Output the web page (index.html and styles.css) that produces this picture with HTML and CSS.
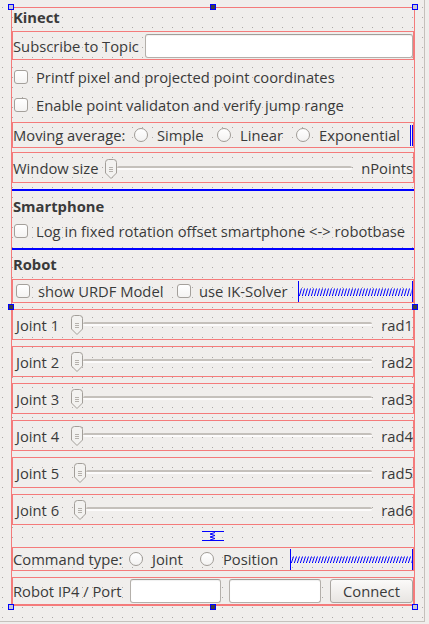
FILE: index.html
```html
<!DOCTYPE html>
<html>
<head>
<meta charset="utf-8">
<link rel="stylesheet" href="styles.css">
</head>
<body>
<div class="form">
  <div class="main">
    <div class="title">Kinect</div>

    <div class="box row-topic">
      <span class="lbl lbl-topic">Subscribe to Topic</span>
      <span class="field field-grow"></span>
    </div>

    <div class="check-row cr-first"><span class="cb"></span><span>Printf pixel and projected point coordinates</span></div>
    <div class="check-row"><span class="cb"></span><span>Enable point validaton and verify jump range</span></div>

    <div class="box row-moving">
      <span class="lbl lbl-moving">Moving average:</span>
      <span class="opt opt-simple"><span class="rb"></span>Simple</span>
      <span class="opt opt-linear"><span class="rb"></span>Linear</span>
      <span class="opt"><span class="rb"></span>Exponential</span>
      <span class="hspacer hspacer-min"></span>
    </div>

    <div class="box row-window">
      <span class="lbl lbl-window">Window size</span>
      <span class="slider slider-window">
        <svg class="handle" width="12" height="20" viewBox="0 0 12 20"><path d="M0.5 3.5 Q0.5 0.5 3.5 0.5 H8.5 Q11.5 0.5 11.5 3.5 V14 L6 19.5 L0.5 14 Z" fill="#f3f2f0" stroke="#a29e99"/><path d="M4 8.5 H8 M4 10.5 H8 M4 12.5 H8" stroke="#b5b1ac"/></svg>
        <span class="track"></span>
      </span>
      <span class="unit">nPoints</span>
    </div>

    <div class="hline hline-1"></div>

    <div class="title t-smart">Smartphone</div>
    <div class="check-row cr-smart"><span class="cb"></span><span>Log in fixed rotation offset smartphone &lt;-&gt; robotbase</span></div>

    <div class="hline hline-2"></div>

    <div class="title t-robot">Robot</div>

    <div class="box row-robot">
      <span class="chk chk-urdf"><span class="cb"></span>show URDF Model</span>
      <span class="chk"><span class="cb"></span>use IK-Solver</span>
      <span class="hspacer hspacer-robot">
        <svg class="zig" width="100%" height="8"><defs><pattern id="zz1" width="3" height="8" patternUnits="userSpaceOnUse"><path d="M0.5 7.5 L2.5 0.5 M0 7.5 H1" fill="none" stroke="#0000ff" stroke-width="1"/></pattern></defs><rect width="100%" height="8" fill="url(#zz1)"/></svg>
      </span>
    </div>

    <div class="box row-joint">
      <span class="lbl lbl-joint">Joint 1</span>
      <span class="slider">
        <svg class="handle" width="12" height="20" viewBox="0 0 12 20"><path d="M0.5 3.5 Q0.5 0.5 3.5 0.5 H8.5 Q11.5 0.5 11.5 3.5 V14 L6 19.5 L0.5 14 Z" fill="#f3f2f0" stroke="#a29e99"/><path d="M4 8.5 H8 M4 10.5 H8 M4 12.5 H8" stroke="#b5b1ac"/></svg>
        <span class="track"></span>
      </span>
      <span class="unit">rad1</span>
    </div>
    <div class="box row-joint">
      <span class="lbl lbl-joint">Joint 2</span>
      <span class="slider">
        <svg class="handle" width="12" height="20" viewBox="0 0 12 20"><path d="M0.5 3.5 Q0.5 0.5 3.5 0.5 H8.5 Q11.5 0.5 11.5 3.5 V14 L6 19.5 L0.5 14 Z" fill="#f3f2f0" stroke="#a29e99"/><path d="M4 8.5 H8 M4 10.5 H8 M4 12.5 H8" stroke="#b5b1ac"/></svg>
        <span class="track"></span>
      </span>
      <span class="unit">rad2</span>
    </div>
    <div class="box row-joint">
      <span class="lbl lbl-joint">Joint 3</span>
      <span class="slider">
        <svg class="handle" width="12" height="20" viewBox="0 0 12 20"><path d="M0.5 3.5 Q0.5 0.5 3.5 0.5 H8.5 Q11.5 0.5 11.5 3.5 V14 L6 19.5 L0.5 14 Z" fill="#f3f2f0" stroke="#a29e99"/><path d="M4 8.5 H8 M4 10.5 H8 M4 12.5 H8" stroke="#b5b1ac"/></svg>
        <span class="track"></span>
      </span>
      <span class="unit">rad3</span>
    </div>
    <div class="box row-joint">
      <span class="lbl lbl-joint">Joint 4</span>
      <span class="slider">
        <svg class="handle" width="12" height="20" viewBox="0 0 12 20"><path d="M0.5 3.5 Q0.5 0.5 3.5 0.5 H8.5 Q11.5 0.5 11.5 3.5 V14 L6 19.5 L0.5 14 Z" fill="#f3f2f0" stroke="#a29e99"/><path d="M4 8.5 H8 M4 10.5 H8 M4 12.5 H8" stroke="#b5b1ac"/></svg>
        <span class="track"></span>
      </span>
      <span class="unit">rad4</span>
    </div>
    <div class="box row-joint">
      <span class="lbl lbl-joint lbl-joint-wide">Joint 5</span>
      <span class="slider">
        <svg class="handle" width="12" height="20" viewBox="0 0 12 20"><path d="M0.5 3.5 Q0.5 0.5 3.5 0.5 H8.5 Q11.5 0.5 11.5 3.5 V14 L6 19.5 L0.5 14 Z" fill="#f3f2f0" stroke="#a29e99"/><path d="M4 8.5 H8 M4 10.5 H8 M4 12.5 H8" stroke="#b5b1ac"/></svg>
        <span class="track"></span>
      </span>
      <span class="unit">rad5</span>
    </div>
    <div class="box row-joint">
      <span class="lbl lbl-joint lbl-joint-wide">Joint 6</span>
      <span class="slider">
        <svg class="handle" width="12" height="20" viewBox="0 0 12 20"><path d="M0.5 3.5 Q0.5 0.5 3.5 0.5 H8.5 Q11.5 0.5 11.5 3.5 V14 L6 19.5 L0.5 14 Z" fill="#f3f2f0" stroke="#a29e99"/><path d="M4 8.5 H8 M4 10.5 H8 M4 12.5 H8" stroke="#b5b1ac"/></svg>
        <span class="track"></span>
      </span>
      <span class="unit">rad6</span>
    </div>

    <svg class="vspacer" width="22" height="10" viewBox="0 0 22 10"><path d="M0 0.5 H22 M0 9.5 H22" stroke="#0000ff"/><path d="M13 1.5 L8 3 L13 4.5 L8 6 L13 7.5 L8 9" fill="none" stroke="#0000ff"/></svg>

    <div class="box row-command">
      <span class="lbl lbl-command">Command type:</span>
      <span class="opt opt-joint"><span class="rb"></span>Joint</span>
      <span class="opt"><span class="rb"></span>Position</span>
      <span class="hspacer hspacer-command">
        <svg class="zig" width="100%" height="7"><defs><pattern id="zz2" width="3" height="7" patternUnits="userSpaceOnUse"><path d="M0.5 6.5 L2.5 0.5 M0 6.5 H1" fill="none" stroke="#0000ff" stroke-width="1"/></pattern></defs><rect width="100%" height="7" fill="url(#zz2)"/></svg>
      </span>
    </div>

    <div class="box row-ip">
      <span class="lbl lbl-ip">Robot IP4 / Port</span>
      <span class="field field-ip"></span>
      <span class="field field-port"></span>
      <span class="button">Connect</span>
    </div>
  </div>

  <span class="grip grip-corner grip-tl"></span>
  <span class="grip grip-edge grip-tc"></span>
  <span class="grip grip-corner grip-tr"></span>
  <span class="grip grip-edge grip-ml"></span>
  <span class="grip grip-edge grip-mr"></span>
  <span class="grip grip-corner grip-bl"></span>
  <span class="grip grip-edge grip-bc"></span>
  <span class="grip grip-corner grip-br"></span>
</div>
</body>
</html>
```

FILE: styles.css
```css
html, body {
  margin: 0;
  padding: 0;
  background: #f0eeec;
}

body {
  font-family: "Open Sans", "DejaVu Sans", sans-serif;
  font-size: 14.75px;
  color: #3a3a3a;
}

.form {
  position: relative;
  width: 425px;
  height: 622px;
  box-sizing: border-box;
  padding: 7px 0 0 11px;
  border-right: 1px solid #c5c1bc;
  border-bottom: 1px solid #c5c1bc;
  background-color: #f0eeec;
  background-image: conic-gradient(at 1px 1px, transparent 75%, #aca8a4 0);
  background-size: 10px 10px;
  background-position: 2px 7px;
}

.main {
  width: 404px;
  height: 599px;
  box-sizing: border-box;
  border: 1px solid #f47b7b;
  display: flex;
  flex-direction: column;
}

.main > * {
  flex: none;
}

.title {
  height: 19px;
  line-height: 19px;
  padding-left: 1px;
  font-weight: 700;
}

.t-smart { margin-top: 6px; }
.t-robot { margin-top: 5px; }

.box {
  box-sizing: border-box;
  border: 1px solid #f47b7b;
  display: flex;
  align-items: center;
}

.lbl {
  flex: none;
  white-space: nowrap;
}

.row-topic { margin-top: 4px; height: 29px; }
.lbl-topic { width: 132px; }

.field {
  display: block;
  height: 24px;
  box-sizing: border-box;
  background: #fff;
  border: 1px solid #b4b0ab;
  border-top-color: #a29e99;
  border-radius: 3px;
  box-shadow: inset 0 1px 1px rgba(0, 0, 0, 0.06);
}

.field-grow { flex: 1; }

.check-row {
  height: 28px;
  display: flex;
  align-items: center;
  padding-left: 2px;
  white-space: nowrap;
}

.cr-first { margin-top: 3px; }
.cr-smart { margin-top: 1px; }

.cb {
  flex: none;
  width: 14px;
  height: 14px;
  box-sizing: border-box;
  border: 1px solid #a4a09b;
  border-radius: 3px;
  background: linear-gradient(#ffffff, #f4f3f2);
  margin-right: 8px;
}

.rb {
  flex: none;
  width: 14px;
  height: 14px;
  box-sizing: border-box;
  border: 1px solid #a09c97;
  border-radius: 50%;
  background: linear-gradient(#ffffff, #f3f2f1);
  margin-right: 9px;
}

.opt {
  flex: none;
  display: flex;
  align-items: center;
  white-space: nowrap;
}

.row-moving { margin-top: 3px; height: 26px; }
.lbl-moving { width: 121px; }
.opt-simple { width: 83px; }
.opt-linear { width: 79px; }

.hspacer {
  box-sizing: border-box;
  border-left: 1px solid #0000ff;
  border-right: 1px solid #0000ff;
  display: flex;
  align-items: center;
}

.hspacer-min {
  width: 3px;
  height: 21px;
  margin-left: auto;
  margin-top: 1px;
}

.zig { display: block; }

.row-window { margin-top: 4px; height: 31px; }
.lbl-window { width: 92px; }

.slider {
  flex: 1;
  display: flex;
  align-items: flex-start;
  height: 20px;
}

.slider-window { margin-top: 3px; }

.handle {
  flex: none;
  display: block;
}

.track {
  flex: 1;
  height: 4px;
  margin-top: 7px;
  box-sizing: border-box;
  border-top: 2px solid #c4c0bb;
  background: #fcfbfb;
  border-radius: 2px;
}

.unit {
  flex: none;
  margin-left: 9px;
  white-space: nowrap;
}

.hline {
  height: 2px;
  background: #0000ff;
}

.hline-1 { margin-top: 6px; }
.hline-2 { margin-top: 3px; }

.row-robot {
  margin-top: 5px;
  height: 24px;
  padding-left: 3px;
}

.chk {
  flex: none;
  display: flex;
  align-items: center;
  white-space: nowrap;
}

.chk-urdf { width: 161px; }

.hspacer-robot {
  flex: 1;
  align-self: stretch;
  margin: 1px 0 0 11px;
}

.row-joint {
  margin-top: 6px;
  height: 31px;
  padding-left: 3px;
}

.lbl-joint { width: 55px; }
.lbl-joint-wide { width: 58px; }

.vspacer {
  display: block;
  margin-top: 6px;
  height: 10px;
  align-self: center;
}

.row-command { margin-top: 6px; height: 24px; }
.lbl-command { width: 116px; }
.opt-joint { width: 71px; }

.hspacer-command {
  flex: 1;
  align-self: stretch;
  margin: 1px 0 0 12px;
}

.row-ip { margin-top: 6px; height: 28px; }
.lbl-ip { width: 117px; }
.field-ip { width: 91px; flex: none; }
.field-port { width: 92px; flex: none; margin-left: 8px; }

.button {
  flex: 1;
  margin-left: 9px;
  height: 24px;
  box-sizing: border-box;
  border: 1px solid #aaa6a1;
  border-radius: 3px;
  background: linear-gradient(#fbfaf9, #e8e5e2);
  display: flex;
  align-items: center;
  justify-content: center;
}

.grip {
  position: absolute;
  width: 6px;
  height: 6px;
  box-sizing: border-box;
  border: 1px solid #0000ff;
}

.grip-corner { background: #c9c9d3; }
.grip-edge { background: #3d3d46; }

.grip-tl { left: 8px; top: 4px; }
.grip-tc { left: 210px; top: 4px; }
.grip-tr { left: 412px; top: 4px; }
.grip-ml { left: 8px; top: 304px; }
.grip-mr { left: 412px; top: 304px; }
.grip-bl { left: 8px; top: 604px; }
.grip-bc { left: 210px; top: 604px; }
.grip-br { left: 412px; top: 604px; }
```
